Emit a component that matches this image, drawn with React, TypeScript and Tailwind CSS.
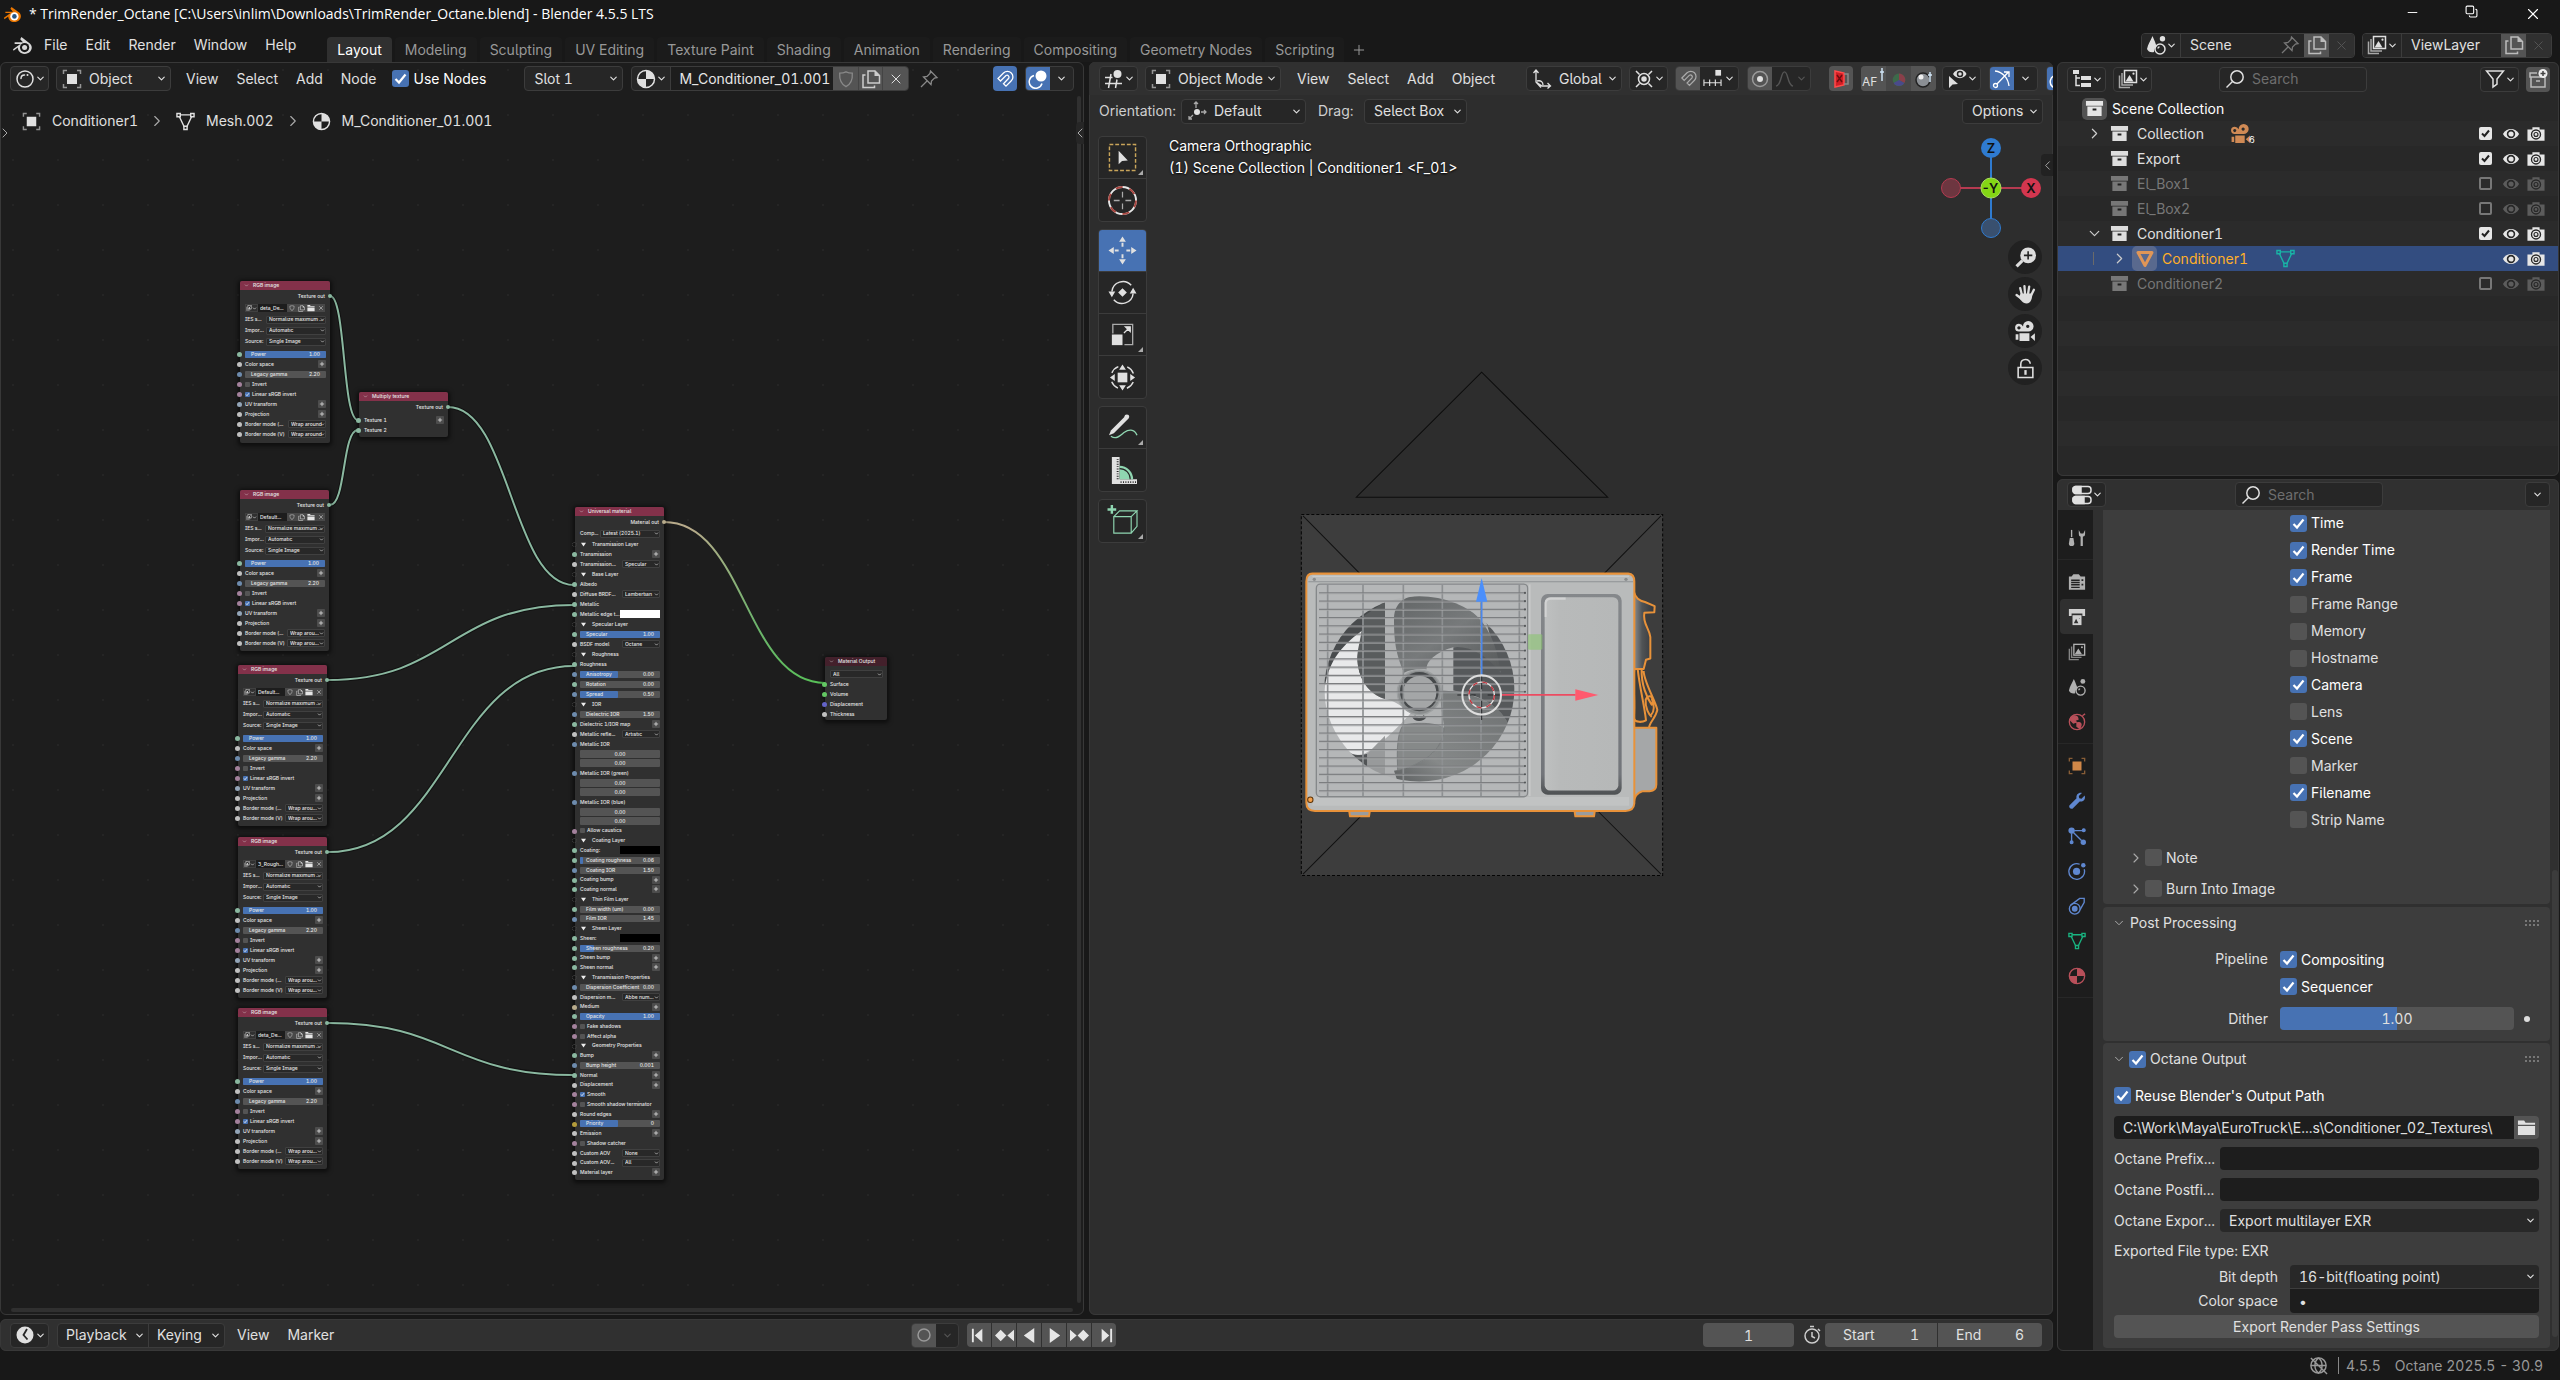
import React from 'react';
import clsx from 'clsx';
import { ChevronDown, ChevronLeft, ChevronRight, Copy, Minus, Plus, X } from 'lucide-react';

type Kids = { children?: React.ReactNode; className?: string };

/* ---------- icons ---------- */

const Icon = ({ children, className = 'size-5' }: Kids) => (
  <svg viewBox="0 0 20 20" className={clsx('shrink-0', className)} fill="none" stroke="currentColor" strokeWidth="1.5">
    {children}
  </svg>
);

// shapes that appear both in headers and in the properties tabs
const objectShape = (
  <>
    <path d="M1.5 5V1.5H5M15 1.5h3.5V5M18.5 15v3.5H15M5 18.5H1.5V15" opacity=".6" />
    <rect x="5" y="5" width="10" height="10" fill="currentColor" stroke="none" />
  </>
);

const meshShape = (
  <>
    <path d="M4.5 3h11M3.6 5l5 10.5M16.4 5l-5 10.5" />
    <path d="M1 1.5H4.5V5H1ZM15.5 1.5H19V5H15.5ZM8.3 15H11.7V18.5H8.3Z" />
  </>
);

const materialShape = (
  <>
    <circle cx="10" cy="10" r="8.5" />
    <path d="M10 1.5A8.5 8.5 0 0 1 18.5 10H10ZM10 18.5A8.5 8.5 0 0 1 1.5 10H10Z" fill="currentColor" stroke="none" />
  </>
);

const imagesShape = (
  <>
    <rect x="6.5" y="1.5" width="12" height="12" />
    <path d="M7.5 12.5 11.5 6 15.5 12.5Z" fill="currentColor" stroke="none" />
    <circle cx="15.5" cy="4.7" r="1.1" fill="currentColor" stroke="none" />
    <path d="M4 4V16H15M1.5 6.5V18.5H12" opacity=".7" />
  </>
);

const sceneShape = (
  <>
    <path d="M6.5 1C8.5 5.5 10 9 10.5 11.5 8.5 13 8 14.5 8 17 5 18 2 16.5 1 14 2 9 4.5 6 6.5 1Z" fill="currentColor" stroke="none" />
    <circle cx="16.5" cy="3.8" r="2.7" fill="currentColor" stroke="none" />
    <circle cx="14" cy="14" r="5" />
    <path d="M12 13.5C12 12.5 12.8 12 13.5 12" />
  </>
);

const BlenderLogo = ({ className, color = false }: { className?: string; color?: boolean }) => (
  <Icon className={className}>
    <path d="M9 2 L17 8 C21 11.5 18 18 12 18 C8 18 5.5 15 5.5 12 L1.5 15 L1 13.5 L8 8.5 H2.5 V7 H10.5 L7.8 4 Z" fill={color ? '#ea7600' : 'currentColor'} stroke="none" />
    <circle cx="12" cy="12" r="4.4" fill={color ? '#fff' : '#181818'} stroke="none" />
    <circle cx="12" cy="12" r="2.4" fill={color ? '#265787' : 'currentColor'} stroke="none" />
  </Icon>
);

const ObjectIcon = ({ className }: Kids) => <Icon className={className}>{objectShape}</Icon>;
const MeshIcon = ({ className }: Kids) => <Icon className={className}>{meshShape}</Icon>;
const MaterialIcon = ({ className }: Kids) => <Icon className={className}>{materialShape}</Icon>;
const ImagesIcon = ({ className }: Kids) => <Icon className={className}>{imagesShape}</Icon>;
const SceneIcon = ({ className }: Kids) => <Icon className={className}>{sceneShape}</Icon>;

const ShadingIcon = () => (
  <Icon>
    <circle cx="10" cy="10" r="8" />
    <path d="M6 9.5C6 7.5 7.5 6 9.5 6" strokeLinecap="round" />
    <circle cx="12.5" cy="6" r="1" fill="currentColor" stroke="none" />
  </Icon>
);

const PinIcon = ({ className = 'size-5' }: Kids) => (
  <Icon className={className}>
    <path d="M11.5 2 18 8.5 15.5 9 12.5 12 12 15.5 4.5 8 8 7.5 11 4.5ZM8 12 2 18" strokeWidth="1.3" />
  </Icon>
);

const ShieldIcon = ({ className = 'size-4' }: Kids) => (
  <Icon className={className}>
    <path d="M3 3.5C6 3.5 8 3 10 2c2 1 4 1.5 7 1.5C17.5 11 15 16 10 18.5 5 16 2.5 11 3 3.5Z" />
  </Icon>
);

const DuplicateIcon = ({ className = 'size-5' }: Kids) => (
  <Icon className={className}>
    <path d="M7 2H14L18.5 6.5V14H7Z" />
    <path d="M13.5 1.5V7H19Z" fill="currentColor" stroke="none" />
    <path d="M4.500 6H2V18.500H13.500V16.500" />
  </Icon>
);

const MagnetIcon = ({ className }: Kids) => (
  <Icon className={className}>
    <path d="M3 9.500 8.500 4A5.5 5.5 0 0 1 16.3 11.800L11 17.200 8.500 14.700 13.700 9.300A2 2 0 0 0 11 6.500L5.500 12Z" strokeWidth="1.3" />
  </Icon>
);

const OverlayIcon = ({ className }: Kids) => (
  <Icon className={className}>
    <circle cx="13" cy="7" r="5.5" fill="currentColor" stroke="none" />
    <path d="M6 6.5A6.5 6.5 0 1 0 14 14.5" />
  </Icon>
);

const ViewportIcon = () => (
  <Icon>
    <circle cx="13.5" cy="5" r="4" fill="currentColor" stroke="none" />
    <path d="M1 8.5h7.5M1 14.5h17M7 5 4.5 19M13 10.5 11.5 19" />
  </Icon>
);

const CollectionIcon = ({ className = 'size-5' }: Kids) => (
  <Icon className={className}>
    <path d="M1 2H19V7H1ZM2.5 8H17.5V18H2.5Z" fill="currentColor" stroke="none" />
    <path d="M8 11h4" stroke="#1f1f1f" strokeWidth="2" />
  </Icon>
);

const EyeIcon = ({ className = 'size-5' }: Kids) => (
  <Icon className={className}>
    <path d="M1 10C5 2.5 15 2.5 19 10 15 17.5 5 17.5 1 10Z" fill="currentColor" stroke="none" />
    <circle cx="10" cy="10" r="3.8" stroke="#282828" strokeWidth="1.8" />
  </Icon>
);

const PhotoIcon = ({ className = 'size-5' }: Kids) => (
  <Icon className={className}>
    <path d="M6 2.5H14V5H19.5V17.5H.5V5H6Z" fill="currentColor" stroke="none" />
    <circle cx="10" cy="10.5" r="5" stroke="#282828" />
    <circle cx="10" cy="10.5" r="2.2" stroke="#282828" strokeWidth="1.3" />
  </Icon>
);

const MovieCamIcon = ({ className = 'size-5' }: Kids) => (
  <Icon className={className}>
    <g fill="currentColor" stroke="none">
      <path fillRule="evenodd" d="M4.5 3.5a4 4 0 0 1 3.7 2.4 4.8 4.8 0 1 1 4.3 4.6H4.5a3.5 3.5 0 0 1 0-7ZM4.5 5.7a1.5 1.5 0 1 0 .01 0ZM12.500 4.300a1.5 1.5 0 1 0 .01 0Z" />
      <path d="M5 12H14V19H5ZM15 15.5 19 12V19ZM1.5 13H4V18H1.5Z" />
    </g>
  </Icon>
);

const SearchIcon = ({ className = 'size-5' }: Kids) => (
  <Icon className={className}>
    <circle cx="12" cy="8" r="6.2" />
    <path d="M7.5 12.5 1.5 18.5" />
  </Icon>
);

const FolderIcon = ({ className = 'size-5' }: Kids) => (
  <Icon className={className}>
    <path d="M1 2.5H7.5L9 5H19V7H1ZM1 8.5H19V18H1Z" fill="currentColor" stroke="none" />
  </Icon>
);

/* ---------- shared controls ---------- */

const box = 'h-[25px] rounded-[4px] border border-[#3c3c3c] bg-[#262626]';

const Caret = () => <ChevronDown className="size-[11px] shrink-0" strokeWidth={2.5} />;

const MenuBtn = ({ children, icon }: Kids & { icon: string }) => (
  <button aria-label={icon} className={clsx(box, 'flex w-[39px] shrink-0 items-center justify-between px-[4px]')}>
    {children}
    <Caret />
  </button>
);

type DropProps = { name: string; value: string; icon?: React.ReactNode; className?: string; id?: string };

const Dropdown = ({ name, value, icon, className, id }: DropProps) => (
  <span className={clsx('relative flex shrink-0 items-center', className)}>
    {icon && <span className="pointer-events-none absolute left-[5px]">{icon}</span>}
    <select id={id} aria-label={id ? undefined : name} className={clsx('h-full w-full appearance-none bg-transparent outline-none', icon ? 'pl-[32px]' : 'pl-[9px]')}>
      <option>{value}</option>
    </select>
    <ChevronDown className="pointer-events-none absolute right-[3px] size-[11px]" strokeWidth={2.5} />
  </span>
);

const Check = ({ label, on = false, white = false }: { label: string; on?: boolean; white?: boolean }) => (
  <label className={clsx('flex items-center gap-1', white && 'text-white')}>
    <span className="relative flex">
      <input type="checkbox" defaultChecked={on} className="peer size-[17px] appearance-none rounded-[3px] bg-[#545454] checked:bg-[#4772b3]" />
      <svg viewBox="0 0 17 17" className="pointer-events-none absolute inset-0 hidden size-[17px] peer-checked:block" fill="none" stroke="#fff" strokeWidth="2.2">
        <path d="M3.5 9 7 12.5 13.5 4.5" />
      </svg>
    </span>
    {label}
  </label>
);

const Menus = ({ items }: { items: string[] }) => (
  <nav className="flex">
    {items.map((m) => (
      <button key={m} className="px-[9px]">{m}</button>
    ))}
  </nav>
);

/* ---------- window chrome ---------- */

const tabs = ['Layout', 'Modeling', 'Sculpting', 'UV Editing', 'Texture Paint', 'Shading', 'Animation', 'Rendering', 'Compositing', 'Geometry Nodes', 'Scripting'];

const TitleBar = () => (
  <div className="flex h-[28px] shrink-0 items-center pl-[3px] text-white">
    <BlenderLogo color className="size-[19px]" />
    <h1 className="ml-[7px] font-['Open_Sans','Noto_Sans',sans-serif] text-[14px]">
      * TrimRender_Octane [C:\Users\inlim\Downloads\TrimRender_Octane.blend] - Blender 4.5.5 LTS
    </h1>
    <div className="ml-auto flex">
      <button aria-label="Minimize" className="flex w-[59px] justify-center"><Minus className="size-[15px]" strokeWidth={1.5} /></button>
      <button aria-label="Restore" className="flex w-[59px] justify-center"><Copy className="size-[13px] -scale-x-100 rotate-90" strokeWidth={2} /></button>
      <button aria-label="Close" className="flex w-[59px] justify-center pl-1"><X className="size-[18px]" strokeWidth={1.5} /></button>
    </div>
  </div>
);

const IdBlock = ({ name, icon, pin, width }: { name: string; icon: React.ReactNode; pin?: boolean; width: string }) => (
  <div className={clsx(box, width, 'flex items-stretch overflow-hidden bg-[#1d1d1d]')}>
    <button aria-label={name + ' list'} className="flex w-[39px] shrink-0 items-center justify-between border-r border-[#3c3c3c] bg-[#262626] px-[4px]">
      {icon}
      <Caret />
    </button>
    <input aria-label={name} defaultValue={name} className="w-0 min-w-0 flex-1 bg-transparent pl-[9px] outline-none" />
    {pin && <span className="flex items-center pr-[4px] text-[#777]"><PinIcon /></span>}
    <button aria-label="Duplicate" className="flex w-[25px] shrink-0 items-center justify-center bg-[#545454] text-[#bbb]"><DuplicateIcon /></button>
    <button aria-label="Unlink" className="flex w-[25px] shrink-0 items-center justify-center bg-[#303030] text-[#555]"><X className="size-[15px]" strokeWidth={1.5} /></button>
  </div>
);

const TopBar = () => (
  <div className="flex h-[34px] shrink-0 items-center pl-[12px] pr-[8px]">
    <BlenderLogo className="size-[21px] text-[#d8d8d8]" />
    <div className="ml-[2px] mr-[22px]"><Menus items={['File', 'Edit', 'Render', 'Window', 'Help']} /></div>
    <div className="flex self-end">
      {tabs.map((t, i) => (
        <button key={t} className={clsx('mr-[3px] h-[25px] rounded-t-[4px] px-[10px]', i === 0 ? 'bg-[#303030] text-white' : 'bg-[#1b1b1b] text-[#989898]')}>
          {t}
        </button>
      ))}
      <button aria-label="Add workspace" className="px-1 text-[#989898]"><Plus className="size-4" strokeWidth={1.5} /></button>
    </div>
    <div className="ml-auto flex gap-[7px]">
      <IdBlock name="Scene" pin width="w-[214px]" icon={<SceneIcon />} />
      <IdBlock name="ViewLayer" width="w-[190px]" icon={<ImagesIcon />} />
    </div>
  </div>
);

/* ---------- node editor ---------- */

const sockets = {
  green: 'bg-[#8ab8a0]',
  white: 'bg-[#c0c0c0]',
  blue: 'bg-[#6d8bad]',
  pink: 'bg-[#a3819c]',
  steel: 'bg-[#93a5b8]',
  cream: 'bg-[#b8ab8b]',
  gold: 'bg-[#b39b3a]',
  shader: 'bg-[#63c763]',
  violet: 'bg-[#6363c7]',
  none: 'border border-dotted border-[#444]',
};

type Row = {
  s?: keyof typeof sockets;
  t: 'plain' | 'plus' | 'group' | 'slider' | 'drop' | 'wide' | 'check' | 'color' | 'pair';
  n: string;
  v?: string;
  fill?: number;
  short?: boolean;
};

const Socket = ({ kind }: { kind: keyof typeof sockets }) => (
  <span className={clsx('absolute -left-[8px] top-1/2 -mt-[2px] size-[5px] rounded-full', sockets[kind])} />
);

const PlusBtn = ({ name }: { name: string }) => (
  <button aria-label={'Add ' + name} className="ml-auto flex size-[8px] items-center justify-center rounded-[1px] bg-[#4c4c4c]">
    <Plus className="size-[6px]" strokeWidth={3} />
  </button>
);

const MiniDrop = ({ name, value, width }: { name: string; value: string; width: string }) => (
  <span className={clsx('relative ml-auto flex h-[8px] shrink-0 items-center rounded-[1px] border border-[#404040] bg-[#282828]', width)}>
    <select aria-label={name} className="h-full w-full appearance-none bg-transparent pl-[2px] leading-none outline-none">
      <option>{value}</option>
    </select>
    <ChevronDown className="pointer-events-none absolute right-0 size-[5px]" strokeWidth={3} />
  </span>
);

const NodeRow = ({ row }: { row: Row }) => {
  const { s, t, n, v = '', fill = 0, short } = row;
  const height = t === 'pair' ? 'h-[29px]' : t === 'wide' ? 'h-[11px]' : short ? 'h-[9px]' : 'h-[10px]';
  if (t === 'pair') {
    return (
      <div className={clsx('relative', height)}>
        <div className="relative flex h-[10px] items-center">{s && <Socket kind={s} />}{n}</div>
        <div className="mt-px flex flex-col gap-px">
          <input aria-label={n + ' n'} defaultValue={v} className="h-[8px] rounded-[1px] bg-[#545454] text-center leading-none outline-none" />
          <input aria-label={n + ' k'} defaultValue={v} className="h-[8px] rounded-[1px] bg-[#545454] text-center leading-none outline-none" />
        </div>
      </div>
    );
  }
  return (
    <div className={clsx('relative flex items-center whitespace-nowrap', height)}>
      {s && <Socket kind={s} />}
      {(t === 'plain' || t === 'plus' || t === 'drop' || t === 'wide' || t === 'color') && <span>{n}</span>}
      {t === 'plus' && <PlusBtn name={n} />}
      {t === 'group' && (
        <>
          <svg viewBox="0 0 6 6" className="ml-px size-[5px]"><path d="M0 1H6L3 5.5Z" fill="#eee" /></svg>
          <span className="ml-[6px]">{n}</span>
        </>
      )}
      {t === 'drop' && <MiniDrop name={n} value={v} width="w-[38px]" />}
      {t === 'wide' && <MiniDrop name={n} value={v} width="w-[60px]" />}
      {t === 'color' && <input type="color" aria-label={n} defaultValue={v} className="ml-auto h-[8px] w-[40px] [&::-webkit-color-swatch-wrapper]:p-0 [&::-webkit-color-swatch]:border-0" />}
      {t === 'check' && (
        <label className="flex items-center gap-[2px]">
          <span className="relative flex">
            <input type="checkbox" defaultChecked={fill > 0} className="peer size-[5px] appearance-none rounded-[1px] bg-[#545454] checked:bg-[#4772b3]" />
            <svg viewBox="0 0 5 5" className="pointer-events-none absolute inset-0 hidden size-[5px] peer-checked:block"><path d="M1 2.5 2 3.7 4 1.2" stroke="#fff" strokeWidth=".8" fill="none" /></svg>
          </span>
          {n}
        </label>
      )}
      {t === 'slider' && (
        <label className="relative flex h-[7px] w-full items-center justify-between rounded-[1px] bg-[#545454] px-[6px]">
          <span className="absolute inset-y-0 left-0 rounded-[1px] bg-[#4772b3]" style={{ width: `${fill}%` }} />
          <span className="relative">{n}</span>
          <span className="relative">{v}</span>
          <input type="range" defaultValue={fill} className="absolute inset-0 h-full w-full opacity-0" />
        </label>
      )}
    </div>
  );
};

const NodeFrame = ({ title, pos, head = 'bg-[#83314a]', out, outKind = 'green', children }: Kids & { title: string; pos: string; head?: string; out?: string; outKind?: keyof typeof sockets }) => (
  <article className={clsx('absolute rounded-[2px] bg-[#303030] text-[5px] leading-none font-medium text-[#e6e6e6] shadow-[0_1px_4px_2px_rgba(0,0,0,0.55)]', pos)}>
    <h3 className={clsx('flex h-[9px] items-center gap-[4px] rounded-t-[2px] pl-[4px]', head)}>
      <ChevronDown className="size-[5px]" strokeWidth={2} />
      {title}
    </h3>
    {out && (
      <div className="relative flex h-[12px] items-center justify-end pr-[5px]">
        {out}
        <span className={clsx('absolute -right-[2px] size-[4px] rounded-full', sockets[outKind])} />
      </div>
    )}
    <div className="pl-[5px] pr-[4px]">{children}</div>
  </article>
);

const rgbRows: Row[] = [
  { s: 'green', t: 'slider', n: 'Power', v: '1.00', fill: 100 },
  { s: 'white', t: 'plus', n: 'Color space' },
  { s: 'blue', t: 'slider', n: 'Legacy gamma', v: '2.20' },
  { s: 'pink', t: 'check', n: 'Invert' },
  { s: 'pink', t: 'check', n: 'Linear sRGB invert', fill: 1 },
  { s: 'steel', t: 'plus', n: 'UV transform' },
  { s: 'white', t: 'plus', n: 'Projection' },
];

const RgbNode = ({ pos, image, wrap }: { pos: string; image: string; wrap: string }) => (
  <NodeFrame title="RGB image" pos={pos} out="Texture out">
    <div className="flex h-[12px] items-center">
      <button aria-label="Browse image" className="flex h-[8px] w-[13px] items-center border border-[#404040]">
        <ImagesIcon className="size-[6px]" />
        <ChevronDown className="size-[5px]" strokeWidth={3} />
      </button>
      <input aria-label="Image name" defaultValue={image} className="h-[8px] w-[29px] bg-[#1d1d1d] pl-[2px] leading-none outline-none" />
      <button aria-label="Fake user" className="flex h-[8px] w-[10px] items-center justify-center bg-[#484848]"><ShieldIcon className="size-[6px]" /></button>
      <button aria-label="Copy image" className="flex h-[8px] w-[9px] items-center justify-center bg-[#484848]"><DuplicateIcon className="size-[7px]" /></button>
      <button aria-label="Open image" className="flex h-[8px] w-[10px] items-center justify-center bg-[#484848]"><FolderIcon className="size-[8px]" /></button>
      <button aria-label="Unlink image" className="flex h-[8px] w-[9px] items-center justify-center bg-[#484848]"><X className="size-[6px]" /></button>
    </div>
    <div className="mb-[2px]">
      <NodeRow row={{ t: 'wide', n: 'IES s...', v: 'Normalize maximum ...' }} />
      <NodeRow row={{ t: 'wide', n: 'Impor...', v: 'Automatic' }} />
      <NodeRow row={{ t: 'wide', n: 'Source:', v: 'Single Image' }} />
    </div>
    {rgbRows.map((r) => <NodeRow key={r.n} row={r} />)}
    <NodeRow row={{ s: 'white', t: 'drop', n: 'Border mode (...', v: wrap }} />
    <NodeRow row={{ s: 'white', t: 'drop', n: 'Border mode (V)', v: wrap }} />
  </NodeFrame>
);

const materialRows: Row[] = [
  { t: 'wide', n: 'Comp...', v: 'Latest (2025.1)' },
  { s: 'none', t: 'group', n: 'Transmission Layer' },
  { s: 'green', t: 'plus', n: 'Transmission' },
  { s: 'white', t: 'drop', n: 'Transmission...', v: 'Specular' },
  { s: 'none', t: 'group', n: 'Base Layer' },
  { s: 'green', t: 'plain', n: 'Albedo' },
  { s: 'white', t: 'drop', n: 'Diffuse BRDF...', v: 'Lambertian' },
  { s: 'green', t: 'plain', n: 'Metallic' },
  { s: 'green', t: 'color', n: 'Metallic edge t...', v: '#ffffff' },
  { s: 'none', t: 'group', n: 'Specular Layer' },
  { s: 'green', t: 'slider', n: 'Specular', v: '1.00', fill: 100 },
  { s: 'white', t: 'drop', n: 'BSDF model', v: 'Octane' },
  { s: 'none', t: 'group', n: 'Roughness' },
  { s: 'green', t: 'plain', n: 'Roughness' },
  { s: 'blue', t: 'slider', n: 'Anisotropy', v: '0.00', fill: 48 },
  { s: 'green', t: 'slider', n: 'Rotation', v: '0.00' },
  { s: 'blue', t: 'slider', n: 'Spread', v: '0.50', fill: 48 },
  { s: 'none', t: 'group', n: 'IOR' },
  { s: 'blue', t: 'slider', n: 'Dielectric IOR', v: '1.50' },
  { s: 'green', t: 'plus', n: 'Dielectric 1/IOR map' },
  { s: 'white', t: 'drop', n: 'Metallic refle...', v: 'Artistic' },
  { s: 'blue', t: 'pair', n: 'Metallic IOR', v: '0.00' },
  { s: 'blue', t: 'pair', n: 'Metallic IOR (green)', v: '0.00' },
  { s: 'blue', t: 'pair', n: 'Metallic IOR (blue)', v: '0.00' },
  { s: 'pink', t: 'check', n: 'Allow caustics', short: true },
  { s: 'none', t: 'group', n: 'Coating Layer' },
  { s: 'green', t: 'color', n: 'Coating:', v: '#000000' },
  { s: 'green', t: 'slider', n: 'Coating roughness', v: '0.06', fill: 4 },
  { s: 'blue', t: 'slider', n: 'Coating IOR', v: '1.50' },
  { s: 'green', t: 'plus', n: 'Coating bump', short: true },
  { s: 'green', t: 'plus', n: 'Coating normal' },
  { s: 'none', t: 'group', n: 'Thin Film Layer' },
  { s: 'green', t: 'slider', n: 'Film width (um)', v: '0.00' },
  { s: 'blue', t: 'slider', n: 'Film IOR', v: '1.45', short: true },
  { s: 'none', t: 'group', n: 'Sheen Layer' },
  { s: 'green', t: 'color', n: 'Sheen:', v: '#000000' },
  { s: 'green', t: 'slider', n: 'Sheen roughness', v: '0.20', fill: 18 },
  { s: 'green', t: 'plus', n: 'Sheen bump', short: true },
  { s: 'green', t: 'plus', n: 'Sheen normal' },
  { s: 'none', t: 'group', n: 'Transmission Properties' },
  { s: 'blue', t: 'slider', n: 'Dispersion Coefficient', v: '0.00' },
  { s: 'white', t: 'drop', n: 'Dispersion m...', v: 'Abbe num...' },
  { s: 'cream', t: 'plus', n: 'Medium', short: true },
  { s: 'green', t: 'slider', n: 'Opacity', v: '1.00', fill: 100 },
  { s: 'pink', t: 'check', n: 'Fake shadows' },
  { s: 'pink', t: 'check', n: 'Affect alpha' },
  { s: 'none', t: 'group', n: 'Geometry Properties', short: true },
  { s: 'green', t: 'plus', n: 'Bump' },
  { s: 'blue', t: 'slider', n: 'Bump height', v: '0.001' },
  { s: 'green', t: 'plus', n: 'Normal' },
  { s: 'white', t: 'plus', n: 'Displacement', short: true },
  { s: 'pink', t: 'check', n: 'Smooth', fill: 1 },
  { s: 'pink', t: 'check', n: 'Smooth shadow terminator' },
  { s: 'white', t: 'plus', n: 'Round edges' },
  { s: 'gold', t: 'slider', n: 'Priority', v: '0', fill: 48, short: true },
  { s: 'white', t: 'plus', n: 'Emission' },
  { s: 'pink', t: 'check', n: 'Shadow catcher' },
  { s: 'white', t: 'drop', n: 'Custom AOV', v: 'None' },
  { s: 'white', t: 'drop', n: 'Custom AOV...', v: 'All', short: true },
  { s: 'white', t: 'plus', n: 'Material layer' },
];

const links = [
  'M330 234C346 234 342 358 358 358',
  'M330 443C346 443 342 368 358 368',
  'M448 345C510 345 512 523 574 523',
  'M328 618C450 618 450 543 574 543',
  'M328 790C450 790 450 604 574 604',
  'M328 961C450 961 450 1013 574 1013',
];

const NodeCanvas = () => (
  <div className="absolute inset-0 overflow-hidden">
    <svg className="absolute inset-0 h-full w-full" fill="none">
      <defs>
        <pattern id="grid" x="-9" y="-9" width="45" height="45" patternUnits="userSpaceOnUse">
          <circle cx="22" cy="17" r="1" fill="#282828" />
        </pattern>
        <linearGradient id="surface" x1="664" y1="460" x2="825" y2="621" gradientUnits="userSpaceOnUse">
          <stop offset=".1" stopColor="#b8ab8b" />
          <stop offset=".6" stopColor="#6db36c" />
          <stop offset="1" stopColor="#57c257" />
        </linearGradient>
      </defs>
      <rect width="100%" height="100%" fill="url(#grid)" />
      {links.map((d) => (
        <g key={d}>
          <path d={d} stroke="#111" strokeWidth="4" />
          <path d={d} stroke="#8ab8a0" strokeWidth="2" />
        </g>
      ))}
      <path d="M664 460C745 460 745 621 825 621" stroke="url(#surface)" strokeWidth="2" />
    </svg>
    <RgbNode pos="left-[240px] top-[219px] h-[162px] w-[90px]" image="deta_De..." wrap="Wrap around" />
    <RgbNode pos="left-[240px] top-[428px] h-[161px] w-[89px]" image="Default..." wrap="Wrap arou..." />
    <RgbNode pos="left-[238px] top-[603px] h-[161px] w-[89px]" image="Default..." wrap="Wrap arou..." />
    <RgbNode pos="left-[238px] top-[775px] h-[161px] w-[89px]" image="3_Rough..." wrap="Wrap arou..." />
    <RgbNode pos="left-[238px] top-[946px] h-[161px] w-[89px]" image="deta_De..." wrap="Wrap arou..." />
    <NodeFrame title="Multiply texture" pos="left-[359px] top-[330px] h-[45px] w-[89px]" out="Texture out">
      <div className="pt-[2px]">
        <NodeRow row={{ s: 'green', t: 'plus', n: 'Texture 1' }} />
        <NodeRow row={{ s: 'green', t: 'plain', n: 'Texture 2' }} />
      </div>
    </NodeFrame>
    <NodeFrame title="Universal material" pos="left-[575px] top-[445px] w-[89px] pb-[3px]" out="Material out" outKind="cream">
      {materialRows.map((r, i) => <NodeRow key={i} row={r} />)}
    </NodeFrame>
    <NodeFrame title="Material Output" head="bg-[#43202b]" pos="left-[825px] top-[595px] h-[63px] w-[62px]">
      <div className="flex h-[13px] items-center pt-[3px]"><MiniDrop name="Target" value="All" width="w-[53px]" /></div>
      <NodeRow row={{ s: 'shader', t: 'plain', n: 'Surface' }} />
      <NodeRow row={{ s: 'shader', t: 'plain', n: 'Volume' }} />
      <NodeRow row={{ s: 'violet', t: 'plain', n: 'Displacement' }} />
      <NodeRow row={{ s: 'white', t: 'plain', n: 'Thickness' }} />
    </NodeFrame>
    <span className="absolute bottom-[3px] left-[11px] right-[11px] h-1 rounded bg-[#303030]" />
    <span className="absolute bottom-[12px] right-[3px] top-[34px] w-1 rounded bg-[#303030]" />
  </div>
);

const crumbs = [
  { icon: <ObjectIcon className="size-[19px]" />, label: 'Conditioner1' },
  { icon: <MeshIcon className="size-[19px]" />, label: 'Mesh.002' },
  { icon: <MaterialIcon className="size-[19px]" />, label: 'M_Conditioner_01.001' },
];

const area = 'relative overflow-hidden rounded-[6px] outline outline-1 -outline-offset-1 outline-[#383838]';

const NodeEditor = () => (
  <section className={clsx(area, 'bg-[#1d1d1d]')} aria-label="Shader editor">
    <NodeCanvas />
    <header className="relative flex h-[33px] items-center pl-[10px] pr-[10px]">
      <MenuBtn icon="Editor type"><ShadingIcon /></MenuBtn>
      <Dropdown name="Shader type" value="Object" icon={<ObjectIcon />} className={clsx(box, 'ml-[7px] mr-[6px] w-[115px]')} />
      <Menus items={['View', 'Select', 'Add', 'Node']} />
      <div className="ml-[7px] w-[132px]"><Check label="Use Nodes" on white /></div>
      <Dropdown name="Slot" value="Slot 1" className={clsx(box, 'w-[99px]')} />
      <div className={clsx(box, 'ml-[8px] flex w-[278px] overflow-hidden')}>
        <button aria-label="Browse material" className="flex w-[39px] shrink-0 items-center justify-between border-r border-[#3c3c3c] px-[4px]">
          <MaterialIcon />
          <Caret />
        </button>
        <input aria-label="Material" defaultValue="M_Conditioner_01.001" className="w-0 min-w-0 flex-1 bg-[#1d1d1d] pl-[8px] text-[#e6e6e6] outline-none" />
        <button aria-label="Fake user" className="flex w-[25px] items-center justify-center bg-[#545454] text-[#888]"><ShieldIcon className="size-[18px]" /></button>
        <button aria-label="New material" className="flex w-[25px] items-center justify-center border-x border-[#444] bg-[#545454] text-[#ccc]"><DuplicateIcon /></button>
        <button aria-label="Unlink material" className="flex w-[25px] items-center justify-center bg-[#545454]"><X className="size-[16px]" strokeWidth={1.5} /></button>
      </div>
      <button aria-label="Pin" className="ml-[10px] text-[#888]"><PinIcon /></button>
      <button aria-label="Snap" className="ml-auto flex h-[25px] w-6 items-center justify-center rounded-[4px] bg-[#4772b3] text-white"><MagnetIcon /></button>
      <span className={clsx(box, 'ml-2 flex w-[49px] overflow-hidden')}>
        <button aria-label="Overlays" className="flex w-6 items-center justify-center bg-[#4772b3] text-white"><OverlayIcon /></button>
        <button aria-label="Overlay options" className="flex flex-1 items-center justify-center"><Caret /></button>
      </span>
    </header>
    <nav className="relative ml-[22px] mt-[16px] flex h-[20px] items-center" aria-label="Path">
      {crumbs.map((c, i) => (
        <React.Fragment key={c.label}>
          {i > 0 && <ChevronRight className="mx-[10px] size-[18px] text-[#aaa]" strokeWidth={1.5} />}
          {c.icon}
          <a href="#" className="ml-[11px]">{c.label}</a>
        </React.Fragment>
      ))}
    </nav>
    <ChevronRight className="absolute -left-[3px] top-[63px] size-4 text-[#aaa]" strokeWidth={1.5} />
    <button aria-label="Show sidebar" className="absolute right-0 top-[60px] h-[22px] w-2 overflow-hidden rounded-l bg-[#262626] text-[#aaa]">
      <ChevronLeft className="-ml-1 size-4" strokeWidth={1.5} />
    </button>
  </section>
);

/* ---------- 3D viewport ---------- */

const slats = Array.from({ length: 25 }, (_, i) => 689 + i * 24.4);

const Model = () => (
  <svg viewBox="0 0 1200 1568" preserveAspectRatio="none" className="absolute left-[190px] top-[298px] h-[530px] w-[400px]" fill="none">
    <defs>
      <clipPath id="opening"><ellipse cx="421" cy="973" rx="285" ry="274" /></clipPath>
      <linearGradient id="blade" x1="0" y1="0" x2="1" y2="1">
        <stop offset="0" stopColor="#626566" />
        <stop offset=".5" stopColor="#777a7b" />
        <stop offset="1" stopColor="#555859" />
      </linearGradient>
      <linearGradient id="lower" x1="0" y1="1" x2="1" y2="0">
        <stop offset="0" stopColor="#5a5d5e" />
        <stop offset=".3" stopColor="#868989" />
        <stop offset="1" stopColor="#6b6e6f" />
      </linearGradient>
      <linearGradient id="pipe">
        <stop offset="0" stopColor="#8b8e90" />
        <stop offset=".4" stopColor="#505355" />
        <stop offset="1" stopColor="#34363a" />
      </linearGradient>
      <linearGradient id="cover" x1="0" y1="0" x2="1" y2="0">
        <stop offset="0" stopColor="#bec0c0" />
        <stop offset=".2" stopColor="#b8baba" />
        <stop offset="1" stopColor="#b6b8b8" />
      </linearGradient>
      <linearGradient id="bevel" x1="0" y1="0" x2="0" y2="1">
        <stop offset="0" stopColor="#85888b" />
        <stop offset=".9" stopColor="#72757a" />
        <stop offset="1" stopColor="#4e5153" />
      </linearGradient>
    </defs>
    <path d="M608 36 232 406H986Z" stroke="#0c0c0c" strokeWidth="3" />
    <rect x="67" y="457" width="1084" height="1068" fill="#3d3d3d" stroke="#050505" strokeWidth="3" strokeDasharray="9 6" />
    <path d="M72 461 245 634M1146 461 973 634M72 1521 245 1350M1146 1521 957 1335" stroke="#111" strokeWidth="3" />

    <g stroke="#e8923a" strokeWidth="6" strokeLinejoin="round">
      <path d="M1064 684C1070 705 1080 712 1098 716L1127 728 1126 746 1096 748C1090 780 1112 795 1114 820V883L1101 887 1094 914H1064Z" fill="url(#pipe)" />
      <path d="M1064 1088H1132V1256Q1132 1274 1112 1276H1090Q1066 1282 1064 1312Z" fill="#a5a7a8" />
      <path d="M1066 914C1060 960 1070 1010 1064 1060 1070 1074 1090 1072 1101 1066 1096 1020 1082 970 1076 914ZM1088 914C1086 960 1104 1000 1118 1020 1130 990 1104 990 1100 1005 1098 1030 1110 1050 1118 1056M1094 920C1094 950 1130 1010 1135 1035 1130 1060 1112 1070 1110 1088M1118 1000C1126 1020 1126 1040 1116 1050" />
      <path d="M210 1330 213 1350H270L273 1330M886 1330 889 1350H945L948 1330" fill="#9a9c9e" />
      <path d="M100 632H1048Q1066 634 1066 655V1312Q1064 1334 1040 1334H108Q82 1334 82 1310V655Q82 632 100 632Z" fill="#b9bbbb" />
    </g>
    <path d="M88 656H1062" stroke="#8f9294" strokeWidth="3" />
    <path d="M100 640H1050" stroke="#c8caca" strokeWidth="4" />
    <path d="M100 1306H1050" stroke="#c1c3c3" strokeWidth="26" />
    <rect x="112" y="663" width="634" height="629" rx="12" fill="#b5b7b8" stroke="#85888a" strokeWidth="4" />
    <path d="M752 664V1290" stroke="#c6c8c8" strokeWidth="6" />

    <g clipPath="url(#opening)">
      <rect x="130" y="690" width="590" height="570" fill="#b0b2b3" />
      <path d="M130 960V690H318V1000Q200 960 250 800 160 870 150 960Z" fill="#484b4d" />
      <path d="M250 800C180 850 145 900 136 980 138 1070 160 1130 215 1168H250C290 1150 345 1100 395 1045 370 1030 357 1010 318 1003 270 990 235 940 235 880Z" fill="#e8e9ea" />
      <path d="M318 715V1003C270 990 235 940 235 880 237 840 250 820 250 760Z" fill="#595c5d" />
      <path d="M600 700H720V1080H690C650 1010 590 990 523 978V850C600 840 640 880 665 925Z" fill="#56595b" />
      <path d="M345 770C345 700 400 690 470 700 600 720 650 810 665 925 620 870 570 845 523 850 480 860 440 890 443 915 420 912 395 915 375 925 350 870 345 830 345 770Z" fill="url(#blade)" />
      <path d="M484 978C570 980 660 1010 690 1080L720 1000V1260H360L345 1215C440 1200 496 1150 495 1080 490 1050 484 1020 484 978Z" fill="url(#lower)" />
      <path d="M372 1080C350 1110 355 1180 356 1215 430 1195 490 1160 495 1090 480 1075 420 1070 372 1080Z" fill="#868989" stroke="#6c6f70" strokeWidth="2" />
      <path d="M190 1150C220 1170 240 1172 265 1165V1240Z" fill="#515456" />
      <path d="M265 1165 318 1112V1250L265 1225Z" fill="#989a9b" />
    </g>
    <circle cx="421" cy="983" r="66" fill="#8a8d8e" stroke="#9da0a1" strokeWidth="4" />
    <circle cx="421" cy="981" r="58" fill="#46494b" />
    <ellipse cx="422" cy="984" rx="50" ry="49" fill="#a4a6a7" />
    <path d="M404 1054C410 1066 430 1066 438 1054" stroke="#46494b" strokeWidth="10" />

    <path d="M146 665V1290M252 665V1290M373 665V1290M490 665V1290M606 665V1290M721 665V1290" stroke="#8d9092" strokeWidth="5" />
    {slats.map((y) => (
      <g key={y}>
        <path d={`M120 ${y}H738`} stroke="#7c7e80" strokeWidth="4" />
        <path d={`M120 ${y + 3}H738`} stroke="#a8aaab" strokeWidth="2" />
        <circle cx="738" cy={y} r="3" fill="#505355" />
      </g>
    ))}

    <rect x="786" y="692" width="242" height="594" rx="20" fill="url(#bevel)" />
    <rect x="797" y="702" width="221" height="572" rx="16" fill="url(#cover)" />
    <path d="M800 760V718Q802 706 816 706H860" stroke="#d2d3d3" strokeWidth="6" />
    <circle cx="106" cy="649" r="5" fill="#8a8c8d" />
    <circle cx="1041" cy="649" r="5" fill="#8a8c8d" />
    <circle cx="94" cy="1301" r="8" fill="#f5a04a" stroke="#5c3408" strokeWidth="3" />

    <rect x="747" y="811" width="43" height="46" rx="4" fill="#8bc56f" opacity=".6" />
    <path d="M608 932V715" stroke="#4b87ec" strokeWidth="5" />
    <path d="M608 645 625 715H591Z" fill="#4b8ffb" />
    <path d="M668 991H890" stroke="#ec4b61" strokeWidth="5" />
    <path d="M958 991 889 974V1008Z" fill="#ff5a6e" />
    <path d="M535 991H590M626 991H662M608 935V974M608 1008V1065" stroke="#26282a" strokeWidth="3" />
    <circle cx="608" cy="991" r="38" stroke="#e8e8e8" strokeWidth="4" />
    <circle cx="608" cy="991" r="38" stroke="#c2333c" strokeWidth="4" strokeDasharray="15 15" />
    <circle cx="608" cy="991" r="58" stroke="#dedede" strokeWidth="6" />
  </svg>
);

const toolGroups: { name: string; more?: boolean; icon: React.ReactNode }[][] = [
  [
    { name: 'Select Box', more: true, icon: <><rect x="1.5" y="1.5" width="27" height="27" stroke="#c9a55a" strokeWidth="1.5" strokeDasharray="4 2" /><path d="M11 8V22L14.5 18.5 20.5 18Z" fill="currentColor" stroke="none" /></> },
    { name: 'Cursor', icon: <><circle cx="15" cy="15" r="14" stroke="#e6e6e6" /><circle cx="15" cy="15" r="14" stroke="#a8453f" strokeDasharray="7.3 7.3" /><path d="M15 6V12M15 18V24M6 15H12M18 15H24" stroke="#aaa" strokeWidth="1.3" /></> },
  ],
  [
    { name: 'Move', icon: <><path d="M15 7V11M15 19V23M7 15H11M19 15H23" /><path d="M15 .5 18.5 6H11.5ZM15 29.5 18.5 24H11.5ZM.5 15 6 11.5V18.5ZM29.5 15 24 11.5V18.5Z" fill="currentColor" stroke="none" /></> },
    { name: 'Rotate', icon: <><path d="M4 14A11.5 11.5 0 0 1 24 7.5M26 16A11.5 11.5 0 0 1 6 22.5" strokeWidth="1.5" /><path d="M.5 14H7.5L4 20ZM22.5 16H29.5L26 10ZM15 10.5 19.5 15 15 19.5 10.5 15Z" fill="currentColor" stroke="none" /></> },
    { name: 'Scale', more: true, icon: <><path d="M5 14V4.5H25.5V25.5H17" stroke="#aaa" strokeWidth="1.4" /><rect x="4" y="15" width="11" height="11" fill="currentColor" stroke="none" /><path d="M16.5 13.5 21 9M23 7V12L18 7Z" fill="currentColor" strokeWidth="1.3" /></> },
    { name: 'Transform', icon: <><circle cx="15" cy="15" r="12" strokeWidth="1.5" strokeDasharray="9.4 9.45" strokeDashoffset="-4.7" /><path d="M15 1.5 18.5 7H11.5ZM15 28.5 18.5 23H11.5ZM2 15 7 11.5V18.5ZM28 15 23 11.5V18.5Z" fill="currentColor" stroke="none" /><rect x="10" y="10" width="10" height="10" fill="currentColor" stroke="none" /></> },
  ],
  [
    { name: 'Annotate', more: true, icon: <><path d="M18 3 21 6 6 21 1 23 3 18Z" fill="currentColor" stroke="none" /><circle cx="19.5" cy="4" r="2.5" fill="currentColor" stroke="none" /><path d="M3 24C9 28 13 23 17 20S27 16 30 23" stroke="#8fd6b1" strokeWidth="1.4" /></> },
    { name: 'Measure', icon: <><path d="M5 1H12V24H30V29H4V1Z" fill="currentColor" stroke="none" /><path d="M12 10A14 14 0 0 1 26 24H12Z" fill="#8fd6b1" stroke="none" /><path d="M12 13A11 11 0 0 1 23 24" stroke="#262626" strokeWidth="1.2" /><path d="M10 3V24M13 27H29" stroke="#262626" strokeWidth="2" strokeDasharray="1 1.5" /></> },
  ],
  [
    { name: 'Add Cube', more: true, icon: <><path d="M6 10H24V27H6ZM6 10 12 4H30L24 10M30 4V20L24 27" stroke="#8fd6b1" strokeWidth="1.2" /><path d="M4 -2V7M-.5 2.5H8.5" stroke="#8fd6b1" strokeWidth="2.5" /></> },
  ],
];

const Toolbar = () => (
  <div className="absolute left-[9px] top-[74px] flex flex-col gap-[7px]" role="toolbar" aria-label="Tools">
    {toolGroups.map((g, i) => (
      <div key={i} className="w-[49px] divide-y divide-[#3c3c3c] overflow-hidden rounded-[4px] border border-[#3c3c3c] bg-[#262626]">
        {g.map((t) => (
          <button key={t.name} aria-label={t.name} className={clsx('relative flex h-[42px] w-full items-center justify-center', t.name === 'Move' && 'bg-[#4772b3]')}>
            <svg viewBox="0 0 30 30" className="size-[29px] overflow-visible" fill="none" stroke="currentColor" strokeWidth="2">{t.icon}</svg>
            {t.more && <svg viewBox="0 0 5 5" className="absolute bottom-[3px] right-[3px] size-[5px]"><path d="M5 0V5H0Z" fill="#aaa" /></svg>}
          </button>
        ))}
      </div>
    ))}
  </div>
);

const AxisGizmo = () => (
  <svg viewBox="0 0 104 104" className="absolute right-[10px] top-[74px] size-[104px]">
    <path d="M52 12V92" stroke="#2f7bd0" strokeWidth="2" />
    <path d="M12 52H92" stroke="#b53a50" strokeWidth="2" />
    <circle cx="52" cy="12" r="10" fill="#2f7bd0" />
    <circle cx="92" cy="52" r="10" fill="#d3364f" />
    <circle cx="12" cy="52" r="9.5" fill="#6d3640" stroke="#b53a50" />
    <circle cx="52" cy="92" r="9.5" fill="#39506f" stroke="#2f7bd0" />
    <circle cx="52" cy="52" r="10" fill="#84d615" stroke="#a8dd5c" />
    <g textAnchor="middle" fontSize="13" fontWeight="600" fill="#111">
      <text x="52" y="17">Z</text>
      <text x="92" y="57">X</text>
      <text x="51" y="57">-Y</text>
    </g>
  </svg>
);

const navItems = [
  { name: 'Zoom', icon: <><circle cx="12.5" cy="8" r="7.5" fill="currentColor" stroke="none" /><path d="M7 13 1.5 18.5" strokeWidth="3" /><path d="M12.5 4V12M8.5 8H16.5" stroke="#222" /></> },
  { name: 'Pan', icon: <><path d="M6.5 10 5 4M9.5 9 9 2M12.5 9 13.5 2.5M15.5 10.5 18 5.5M6 14 1.5 10.5" strokeWidth="2.2" strokeLinecap="round" /><path d="M5.5 9H16.5C16.5 13 15.5 18.5 11 18.5 7 18.5 5 14 3.5 12.5Z" fill="currentColor" stroke="none" /></> },
  { name: 'Camera view', icon: null },
  { name: 'Lock', icon: <><path d="M3 9H17V18.5H3ZM5.5 9V6C5.5 0 14.5 0 14.5 5.5" /><path d="M10 11.5V16" strokeWidth="2.2" /></> },
];

const NavButtons = () => (
  <div className="absolute right-[11px] top-[178px] flex flex-col gap-[3px]">
    {navItems.map((b) => (
      <button key={b.name} aria-label={b.name} className="flex size-[34px] items-center justify-center rounded-full bg-[#212121] text-[#ddd]">
        {b.icon ? <Icon className="size-[21px]">{b.icon}</Icon> : <MovieCamIcon className="size-[22px]" />}
      </button>
    ))}
  </div>
);

const PairBtn = ({ name, children, className }: Kids & { name: string }) => (
  <span className={clsx(box, 'flex w-[49px] overflow-hidden', className)}>
    <button aria-label={name} className="flex w-6 shrink-0 items-center justify-center bg-[#4772b3] text-white">{children}</button>
    <button aria-label={name + ' options'} className="flex flex-1 items-center justify-center"><Caret /></button>
  </span>
);

const Viewport = () => (
  <section className={clsx(area, 'bg-[#2d2d2d]')} aria-label="3D viewport">
    <Model />
    <header className="relative flex h-[33px] items-center bg-[#303030] pl-[10px] *:shrink-0">
      <MenuBtn icon="Editor type"><ViewportIcon /></MenuBtn>
      <Dropdown name="Mode" value="Object Mode" icon={<ObjectIcon />} className={clsx(box, 'ml-[7px] mr-[7px] w-[136px]')} />
      <div className="w-[238px]"><Menus items={['View', 'Select', 'Add', 'Object']} /></div>
      <Dropdown name="Transform orientation" value="Global" icon={<Icon><path d="M4 1V13L10 17H18M4 13 9 18.5M1.5 4 4 1 6.5 4M15.5 14 18.5 17 15.5 19.5M5 12C9 11 11 13 11 16" strokeWidth="1.3" /></Icon>} className={clsx(box, 'w-[96px]')} />
      <span className="ml-[7px]">
        <MenuBtn icon="Pivot"><Icon><circle cx="10" cy="10" r="5.5" /><circle cx="10" cy="10" r="2" fill="currentColor" /><path d="M2 2 5.5 5.5M18 2 14.5 5.5M2 18 5.5 14.5M18 18 14.5 14.5" /></Icon></MenuBtn>
      </span>
      <span className={clsx(box, 'ml-[7px] flex w-[64px] overflow-hidden')}>
        <button aria-label="Snap" className="flex w-6 items-center justify-center bg-[#545454] text-[#aaa]"><MagnetIcon className="size-[19px]" /></button>
        <button aria-label="Snap to" className="flex flex-1 items-center justify-between px-[3px]">
          <Icon className="size-[19px]"><path d="M1 14.5H19M1 11V18M7 11V18M13 11V18M19 11V18" strokeWidth="1.2" /><rect x="13" y="1" width="6" height="6" fill="currentColor" stroke="none" /></Icon>
          <Caret />
        </button>
      </span>
      <span className={clsx(box, 'ml-2 flex w-[64px] overflow-hidden')}>
        <button aria-label="Proportional editing" className="flex w-6 items-center justify-center bg-[#545454]"><Icon><circle cx="10" cy="10" r="7.5" opacity=".5" /><circle cx="10" cy="10" r="3" fill="currentColor" stroke="none" /></Icon></button>
        <button aria-label="Falloff" className="flex flex-1 items-center justify-between px-[3px] text-[#555]">
          <Icon className="size-[19px]"><path d="M1 18C7 17 6 3 10 3S13 17 19 18" /></Icon>
          <Caret />
        </button>
      </span>
      <button aria-label="Render region" className="ml-[18px] flex h-[25px] w-6 items-center justify-center rounded-[4px] bg-[#545454]"><Icon><path d="M4 2 13 4V16L4 18Z" fill="#d31d24" stroke="#ff4a4a" /><path d="M6 6 11 13M11 6 6 13" stroke="#6c0c10" /><path d="M13 5H17V15H13" stroke="#888" /></Icon></button>
      <span className="ml-[8px] flex overflow-hidden rounded-[4px] bg-[#484848]">
        <button aria-label="Auto focus" className="relative flex h-[25px] w-[25px] items-end bg-[#545454] pb-px pl-px text-[12px] leading-[16px]">
          AF
          <svg viewBox="0 0 6 14" className="absolute right-px top-[2px] h-[14px] w-[6px]"><path d="M3 0V13M1 4H5" stroke="#cfe3f5" strokeWidth="1.5" /></svg>
        </button>
        <button aria-label="White balance" className="flex h-[25px] w-[25px] items-center justify-center"><Icon className="size-[18px]"><circle cx="10" cy="11" r="7" fill="#3d6a4a" stroke="none" /><path d="M10 11V4A7 7 0 0 1 16 14.5Z" fill="#8a3f4a" stroke="none" /><path d="M10 11 4 14.5A7 7 0 0 0 16 14.5Z" fill="#4a4a8a" stroke="none" /></Icon></button>
        <button aria-label="Material picker" className="flex h-[25px] w-[25px] items-center justify-center bg-[#545454]"><Icon className="size-[20px]"><circle cx="9" cy="11" r="7" fill="#8b8f94" stroke="#222" /><circle cx="7" cy="8" r="2.5" fill="#eee" stroke="none" /><path d="M16 3V13M14 6H18" stroke="#cfe3f5" /></Icon></button>
      </span>
      <span className="ml-[6px]">
        <MenuBtn icon="Visibility"><Icon><path d="M6 5C9-1 17-1 19.5 5 17 10.5 9 10.5 6 5Z" fill="currentColor" stroke="none" /><circle cx="13" cy="5" r="2.5" stroke="#262626" /><path d="M2 7V19L5.5 15.5 11 15Z" fill="currentColor" stroke="none" /></Icon></MenuBtn>
      </span>
      <PairBtn name="Gizmos" className="ml-2">
        <Icon><path d="M3 2C11 3 16 9 17 17M4 16 16 3.5M12 3H17V8" strokeWidth="1.3" /><circle cx="3.5" cy="16.5" r="2" fill="#4772b3" strokeWidth="1.3" /></Icon>
      </PairBtn>
      <PairBtn name="Viewport overlays" className="ml-2"><OverlayIcon /></PairBtn>
    </header>
    <div className="relative flex h-[32px] items-center pl-[10px] pr-[10px]">
      <label htmlFor="orientation" className="w-[82px] text-[#cfcfcf]">Orientation:</label>
      <Dropdown id="orientation" name="Orientation" value="Default" icon={<Icon><circle cx="10" cy="11" r="3" fill="currentColor" stroke="none" /><path d="M9 7V1M7 3 9 1 11 3M14 11H19M17 9 19 11 17 13M6 14 2 18M2 15V18H5" opacity=".7" strokeWidth="1.3" /></Icon>} className={clsx(box, 'w-[125px]')} />
      <label htmlFor="drag" className="ml-[12px] w-[46px] text-[#cfcfcf]">Drag:</label>
      <Dropdown id="drag" name="Drag" value="Select Box" className={clsx(box, 'w-[103px]')} />
      <button className={clsx(box, 'ml-auto flex w-[81px] items-center justify-between pl-[9px] pr-[3px]')}>Options <Caret /></button>
    </div>
    <div className="relative ml-[80px] mt-[8px] w-fit leading-[22px] text-white [text-shadow:0_1px_2px_#000]">
      <p>Camera Orthographic</p>
      <p>(1) Scene Collection | Conditioner1 &lt;F_01&gt;</p>
    </div>
    <Toolbar />
    <AxisGizmo />
    <NavButtons />
    <button aria-label="Show sidebar" className="absolute right-0 top-[92px] flex h-[22px] w-[12px] items-center justify-center rounded-l bg-[#222] text-[#aaa]">
      <ChevronLeft className="size-[15px] shrink-0" strokeWidth={1.5} />
    </button>
  </section>
);

/* ---------- timeline ---------- */

const transport = [
  { name: 'First frame', d: 'M2 3H4V17H2ZM13 3V17L5 10Z' },
  { name: 'Previous keyframe', d: 'M6 4 12 10 6 16 0 10ZM20 4V16L13 10Z' },
  { name: 'Play reverse', d: 'M15 2V18L4 10Z' },
  { name: 'Play', d: 'M5 2V18L16 10Z' },
  { name: 'Next keyframe', d: 'M14 4 20 10 14 16 8 10ZM0 4V16L7 10Z' },
  { name: 'Last frame', d: 'M16 3H18V17H16ZM7 3V17L15 10Z' },
];

const Timeline = () => (
  <section className={clsx(area, 'flex h-[32px] shrink-0 items-center bg-[#303030] pl-[10px] pr-[11px]')} aria-label="Timeline">
    <MenuBtn icon="Editor type"><Icon><circle cx="10" cy="10" r="8.5" fill="currentColor" stroke="none" /><path d="M12 4 8.5 10 12.5 14.5" stroke="#262626" strokeWidth="1.8" /></Icon></MenuBtn>
    <div className={clsx(box, 'ml-2 flex divide-x divide-[#3c3c3c]')}>
      <button className="flex w-[91px] items-center justify-between pl-[8px] pr-[3px]">Playback<Caret /></button>
      <button className="flex w-[75px] items-center justify-between pl-[8px] pr-[3px]">Keying<Caret /></button>
    </div>
    <div className="ml-[3px]"><Menus items={['View', 'Marker']} /></div>
    <span className={clsx(box, 'ml-auto flex w-[48px] overflow-hidden')}>
      <button aria-label="Auto keying" className="flex w-6 items-center justify-center bg-[#545454] text-[#999]"><Icon><circle cx="10" cy="10" r="6" /></Icon></button>
      <button aria-label="Auto keying options" className="flex flex-1 items-center justify-center text-[#555]"><Caret /></button>
    </span>
    <span className="ml-2 flex gap-px overflow-hidden rounded-[4px]">
      {transport.map((b) => (
        <button key={b.name} aria-label={b.name} className="flex h-6 w-6 items-center justify-center bg-[#545454]"><svg viewBox="0 0 20 20" className="size-[19px]"><path d={b.d} fill="#e6e6e6" /></svg></button>
      ))}
    </span>
    <input aria-label="Current frame" defaultValue="1" className="ml-[587px] h-6 w-[91px] rounded-[4px] bg-[#545454] text-center outline-none" />
    <button aria-label="Use preview range" className="ml-[6px] flex h-6 w-6 items-center justify-center rounded-[4px] text-[#ccc]"><Icon><circle cx="10" cy="11" r="7" /><path d="M10 7V11.5L13 13M8 1.5H12M16 4 18 6" /></Icon></button>
    <label className="ml-px flex h-6 w-[112px] items-center rounded-l-[4px] bg-[#545454] px-[18px]">Start<input defaultValue="1" className="w-0 min-w-0 flex-1 bg-transparent text-right outline-none" /></label>
    <label className="ml-px flex h-6 w-[104px] items-center rounded-r-[4px] bg-[#545454] px-[18px]">End<input defaultValue="6" className="w-0 min-w-0 flex-1 bg-transparent text-right outline-none" /></label>
  </section>
);

/* ---------- outliner ---------- */

const SearchBox = ({ className }: Kids) => (
  <label className={clsx(box, 'flex w-[148px] items-center bg-[#1d1d1d] pl-[5px]', className)}>
    <SearchIcon />
    <input type="search" aria-label="Search" placeholder="Search" className="w-0 min-w-0 flex-1 bg-transparent pl-[7px] outline-none placeholder:text-[#6e6e6e]" />
  </label>
);

type Item = { name: string; on?: boolean; arrow?: 'right' | 'down'; extra?: boolean; child?: boolean };

const items: Item[] = [
  { name: 'Collection', on: true, arrow: 'right', extra: true },
  { name: 'Export', on: true },
  { name: 'El_Box1' },
  { name: 'El_Box2' },
  { name: 'Conditioner1', on: true, arrow: 'down' },
  { name: 'Conditioner1', on: true, arrow: 'right', child: true },
  { name: 'Conditioner2' },
];

const OutlinerRow = ({ item }: { item: Item }) => (
  <li className={clsx('flex h-[25px] items-center pr-[11px]', item.child ? 'bg-[#334d80] pl-[37px] text-[#ffaf29]' : 'pl-[25px] odd:bg-[#2b2b2b]', !item.on && 'text-[#777]')}>
    {item.child && <span className="-ml-px mr-[13px] h-[13px] w-px bg-[#6a6a6a]" />}
    <button aria-label="Expand" className="flex w-[25px] justify-center text-[#ccc]">
      {item.arrow === 'right' && <ChevronRight className="size-[17px]" strokeWidth={1.7} />}
      {item.arrow === 'down' && <ChevronDown className="size-[17px]" strokeWidth={1.7} />}
    </button>
    {item.child ? (
      <span className="flex size-[25px] items-center justify-center rounded-[5px] bg-[#59698e] text-[#e09657]">
        <Icon><path d="M3 3.5H17L10 16.5Z" strokeWidth="3" strokeLinejoin="round" /></Icon>
      </span>
    ) : (
      <span className="flex w-[25px] justify-center"><CollectionIcon className={clsx('size-[19px]', item.on && 'text-[#ddd]')} /></span>
    )}
    <span className="ml-[5px]">{item.name}</span>
    {item.child && <span className="ml-[28px] text-[#19b3a5]"><MeshIcon className="size-[19px]" /></span>}
    {item.extra && <span className="ml-[26px] flex items-end text-[#d08a55]"><MovieCamIcon className="size-[21px]" /><small className="-ml-[2px] text-[9px] leading-[9px] text-white">6</small></span>}
    <span className={clsx('ml-auto flex items-center', item.on ? 'text-[#e6e6e6]' : 'text-[#5c5c5c]')}>
      {!item.child && (
        <span className="relative flex w-[25px] justify-center">
          <input type="checkbox" aria-label={'Include ' + item.name} defaultChecked={item.on} className="peer size-[13px] appearance-none rounded-[2px] border-2 border-[#777] checked:border-0 checked:bg-[#e6e6e6]" />
          <svg viewBox="0 0 13 13" className="pointer-events-none absolute left-[6px] top-0 hidden size-[13px] peer-checked:block"><path d="M3 6.5 5.5 9 10 3.5" stroke="#222" strokeWidth="2" fill="none" /></svg>
        </span>
      )}
      <button aria-label={'Hide ' + item.name} className="flex w-[25px] justify-center"><EyeIcon className="size-[18px]" /></button>
      <button aria-label={'Disable render ' + item.name} className="flex w-[25px] justify-center"><PhotoIcon className="size-[18px]" /></button>
    </span>
  </li>
);

const Outliner = () => (
  <section className={clsx(area, 'h-[414px] shrink-0 bg-[#282828]')} aria-label="Outliner">
    <header className="flex h-[34px] items-center pl-[10px] pr-[9px]">
      <MenuBtn icon="Editor type"><Icon><path d="M1 1H7V5H1ZM9 7H19V11H9ZM9 14H19V18H9Z" fill="currentColor" stroke="none" /><path d="M4 6V16.5H8M4 9H8" /></Icon></MenuBtn>
      <span className="ml-[7px]"><MenuBtn icon="Display mode"><ImagesIcon /></MenuBtn></span>
      <SearchBox className="ml-[67px]" />
      <span className="ml-auto"><MenuBtn icon="Filter"><Icon><path d="M1.5 2H18.5L12 10V15L8 18V10Z" /></Icon></MenuBtn></span>
      <button aria-label="New collection" className="ml-[7px] flex h-[25px] w-[24px] items-center justify-center rounded-[4px] bg-[#545454] text-[#bbb]">
        <Icon><path d="M9 4H2V8H17V18H3V8M8 12H12" /><circle cx="15" cy="4.5" r="4.5" fill="#eee" stroke="none" /><path d="M15 2V7M12.5 4.5H17.5" stroke="#444" /></Icon>
      </button>
    </header>
    <div className="flex h-[25px] items-center pl-[25px] text-white">
      <span className="flex h-[22px] w-[25px] items-center justify-center rounded-[5px] bg-[#535353] text-[#e6e6e6]"><CollectionIcon className="size-[19px]" /></span>
      <span className="ml-[5px]">Scene Collection</span>
    </div>
    <ul>
      {items.map((it, i) => <OutlinerRow key={i} item={it} />)}
      {[0, 1, 2, 3, 4, 5, 6].map((i) => <li key={i} className="h-[25px] odd:bg-[#2b2b2b]" />)}
    </ul>
  </section>
);

/* ---------- properties ---------- */

const propTabs = [
  { name: 'Tool', color: 'text-[#b0b0b0]', gap: true, d: <><path d="M4 1V9" /><path d="M2 10H6L7 16A3 3 0 0 1 1 16Z" fill="currentColor" stroke="none" /><path d="M12 1V5C12 8 13 8 14 8.5V19H16.5V8.5C18 8 19 8 19 5V1L17 5H14Z" fill="currentColor" stroke="none" /></> },
  { name: 'Render', color: 'text-[#b0b0b0]', d: <><path d="M4 4 6 1.5H12L14 4H19V18.5H1V4Z" fill="currentColor" stroke="none" /><path d="M3.5 8H13M3.5 16H13M3.5 10.5H13M3.5 13H13" stroke="#222" /><path d="M16 7V9M16 12V14" stroke="#222" strokeWidth="2" /></> },
  { name: 'Output', color: 'text-[#d0d0d0]', active: true, d: <><path d="M1 1H19V9H16V6H4V9H1Z" fill="currentColor" stroke="none" /><path d="M5 8H15V19H5Z" fill="currentColor" stroke="none" /><path d="M6.5 17 9 12 11.5 17ZM12 11H13V12Z" fill="#303030" stroke="none" /></> },
  { name: 'View Layer', color: 'text-[#b0b0b0]', d: imagesShape },
  { name: 'Scene', color: 'text-[#b0b0b0]', d: sceneShape },
  { name: 'World', color: 'text-[#b8505a]', gap: true, d: <><circle cx="10" cy="10" r="8.5" /><path d="M3 5C7 2 11 3 11 7L8 8 9 10 6 11 3 8ZM10 11C14 10 16 12 13 17L10 15ZM16 3 19 1" fill="currentColor" /></> },
  { name: 'Object', color: 'text-[#d18848]', d: objectShape },
  { name: 'Modifiers', color: 'text-[#5f87cf]', d: <path d="M18.5 4 15 7.5 12.5 7 12 4.5 15.5 1C12 0 8.5 3 9.5 7L1.5 15C.5 17 3 19.5 5 18.5L13 10.5C17 11.5 20 8 18.5 4Z" fill="currentColor" stroke="none" /> },
  { name: 'Particles', color: 'text-[#5f87cf]', d: <><circle cx="4" cy="4" r="3.5" fill="currentColor" stroke="none" /><circle cx="17" cy="17" r="3" fill="currentColor" stroke="none" /><circle cx="17.5" cy="3.5" r="1.5" fill="currentColor" /><circle cx="4" cy="17" r="1.5" fill="currentColor" /><path d="M7 4H16M4 7V16M6 6 15 15" /></> },
  { name: 'Physics', color: 'text-[#5f87cf]', d: <><circle cx="9.5" cy="10.5" r="4" fill="currentColor" stroke="none" /><circle cx="17" cy="3.5" r="2.5" fill="currentColor" stroke="none" /><path d="M13 2.5A8.7 8.7 0 1 0 18 8" /></> },
  { name: 'Constraints', color: 'text-[#5f87cf]', d: <><circle cx="7.5" cy="13" r="6" /><circle cx="7.5" cy="13" r="2.5" fill="currentColor" /><path d="M3 9 13 1.5H18V6L13.5 14" /></> },
  { name: 'Data', color: 'text-[#19b380]', d: meshShape },
  { name: 'Material', color: 'text-[#b8505a]', gap: true, d: materialShape },
];

const metadata: [string, boolean][] = [
  ['Time', true], ['Render Time', true], ['Frame', true], ['Frame Range', false], ['Memory', false], ['Hostname', false],
  ['Camera', true], ['Lens', false], ['Scene', true], ['Marker', false], ['Filename', true], ['Strip Name', false],
];

const Grip = () => (
  <svg viewBox="0 0 14 6" className="ml-auto h-[6px] w-[14px]" fill="#777">
    {[0, 4, 8, 12].map((x) => <path key={x} d={`M${x} 0h2v2h-2zM${x} 4h2v2h-2z`} />)}
  </svg>
);

const field = 'h-[23px] min-w-0 rounded-[4px] bg-[#1d1d1d] outline-none';

const Properties = () => (
  <section className={clsx(area, 'flex min-h-0 flex-1 flex-col bg-[#303030]')} aria-label="Properties">
    <header className="flex h-[31px] shrink-0 items-center pl-[10px] pr-[9px]">
      <MenuBtn icon="Editor type"><Icon><rect x="1" y="1.5" width="18" height="7" rx="3" /><rect x="1" y="11.5" width="18" height="7" rx="3" /><path d="M3 1.5H9V8.5H3L1 6V3ZM3 11.5H12V18.5H3L1 16V13Z" fill="currentColor" /></Icon></MenuBtn>
      <SearchBox className="ml-[129px]" />
      <button aria-label="Options" className={clsx(box, 'ml-auto flex w-[25px] items-center justify-center')}><Caret /></button>
    </header>
    <div className="flex min-h-0 flex-1">
      <nav className="w-[36px] shrink-0 bg-[#1d1d1d] pt-[10px]">
        {propTabs.map((t) => (
          <div key={t.name} className={clsx(t.gap && 'mb-[4px] border-b border-[#272727] pb-[4px]')}>
            <button aria-label={t.name} className={clsx('ml-[3px] flex h-[35px] w-[33px] items-center justify-center rounded-l-[4px]', t.color, t.active && 'bg-[#303030]')}>
              <Icon className="size-[18px]">{t.d}</Icon>
            </button>
          </div>
        ))}
      </nav>
      <div className="relative flex-1 pl-[10px] pr-[9px]">
        <div className="flex h-[394px] flex-col rounded-b-[4px] bg-[#3d3d3d] pl-[187px]">
          {metadata.map(([label, on]) => (
            <div key={label} className="flex h-[27px] items-center"><Check label={label} on={on} white={on} /></div>
          ))}
          <div className="-ml-[162px] mt-[9px]">
            {['Note', 'Burn Into Image'].map((n) => (
              <div key={n} className="flex h-[31px] items-center">
                <ChevronRight className="mr-px size-[16px] text-[#aaa]" strokeWidth={1.7} />
                <Check label={n} />
              </div>
            ))}
          </div>
        </div>
        <div className="mt-[3px] h-[134px] rounded-[4px] bg-[#3d3d3d] pl-[9px] pr-[11px]">
          <h2 className="flex h-[32px] items-center"><ChevronDown className="mr-[4px] size-[14px] text-[#aaa]" strokeWidth={1.7} />Post Processing<Grip /></h2>
          <div className="mt-[7px] flex">
            <span className="w-[156px] pt-[3px] text-right">Pipeline</span>
            <div className="ml-[12px]">
              <div className="flex h-[27px] items-center"><Check label="Compositing" on white /></div>
              <div className="flex h-[27px] items-center"><Check label="Sequencer" on white /></div>
            </div>
          </div>
          <div className="mt-[7px] flex items-center">
            <label htmlFor="dither" className="w-[156px] text-right">Dither</label>
            <span className="relative ml-[12px] h-[23px] flex-1 overflow-hidden rounded-[4px] bg-[#545454]">
              <span className="absolute inset-y-0 left-0 w-1/2 bg-[#4772b3]" />
              <span className="absolute inset-0 flex items-center justify-center">1.00</span>
              <input id="dither" type="range" min="0" max="2" defaultValue="1" className="absolute inset-0 h-full w-full opacity-0" />
            </span>
            <span className="ml-[10px] mr-[9px] size-[6px] rounded-full bg-[#ddd]" />
          </div>
        </div>
        <div className="mt-[2px] h-[305px] rounded-[4px] bg-[#3d3d3d] pl-[11px] pr-[11px]">
          <h2 className="flex h-[32px] items-center">
            <ChevronDown className="-ml-[2px] mr-[3px] size-[14px] text-[#aaa]" strokeWidth={1.7} />
            <Check label="Octane Output" on />
            <Grip />
          </h2>
          <div className="mt-[7px] flex h-[27px] items-center"><Check label="Reuse Blender's Output Path" on white /></div>
          <div className="mt-[7px] flex">
            <input aria-label="Output path" defaultValue="C:\Work\Maya\EuroTruck\E...s\Conditioner_02_Textures\" className={clsx(field, 'flex-1 rounded-r-none pl-[9px]')} />
            <button aria-label="Browse" className="flex w-[25px] items-center justify-center rounded-r-[4px] bg-[#545454]"><FolderIcon className="size-[19px]" /></button>
          </div>
          <div className="mt-[8px] grid grid-cols-[106px_1fr] items-center gap-y-[8px]">
            <label htmlFor="prefix">Octane Prefix...</label>
            <input id="prefix" className={field} />
            <label htmlFor="postfix">Octane Postfi...</label>
            <input id="postfix" className={field} />
            <label htmlFor="export">Octane Expor...</label>
            <Dropdown id="export" name="Export" value="Export multilayer EXR" className="h-[23px] rounded-[4px] bg-[#282828]" />
          </div>
          <p className="mt-[7px] h-[24px] leading-[24px]">Exported File type: EXR</p>
          <div className="mt-[2px] grid grid-cols-[164px_1fr] items-center gap-x-[12px] gap-y-px text-right">
            <label htmlFor="depth">Bit depth</label>
            <Dropdown id="depth" name="Bit depth" value="16-bit(floating point)" className="h-[23px] rounded-t-[4px] bg-[#282828]" />
            <label htmlFor="space">Color space</label>
            <input id="space" defaultValue="•" className={clsx(field, 'h-[24px] rounded-t-none pl-[9px]')} />
          </div>
          <button className="mt-[2px] h-[23px] w-full rounded-[4px] bg-[#545454]">Export Render Pass Settings</button>
        </div>
        <span className="absolute bottom-[14px] right-px top-[360px] w-[6px] rounded-full bg-[#3c3c3c]" />
      </div>
    </div>
  </section>
);

const StatusBar = () => (
  <footer className="flex h-[29px] shrink-0 items-center justify-end pr-[17px] text-[#999]">
    <Icon className="size-[19px]"><circle cx="10" cy="10" r="8" /><path d="M2 10H18M10 2C5 6 5 14 10 18 15 14 15 6 10 2M2 2 19 19" /></Icon>
    <span className="ml-[10px] h-[17px] w-px bg-[#888]" />
    <span className="ml-[7px]">4.5.5</span>
    <span className="ml-[14px]">Octane 2025.5 - 30.9</span>
  </footer>
);

export default function App() {
  return (
    <div className="flex h-screen w-full flex-col overflow-hidden bg-[#181818] font-['Inter','Noto_Sans',sans-serif] text-[14px] leading-[20px] text-[#e0e0e0] [font-feature-settings:'tnum','cv05','cv08']">
      <TitleBar />
      <TopBar />
      <main className="flex min-h-0 flex-1 gap-[4px]">
        <div className="flex min-w-0 flex-1 flex-col gap-[4px]">
          <div className="grid min-h-0 flex-1 grid-cols-[1084fr_964fr] gap-[5px]">
            <NodeEditor />
            <Viewport />
          </div>
          <Timeline />
        </div>
        <aside className="flex w-[503px] shrink-0 flex-col gap-[3px] pr-px">
          <Outliner />
          <Properties />
        </aside>
      </main>
      <StatusBar />
    </div>
  );
}
